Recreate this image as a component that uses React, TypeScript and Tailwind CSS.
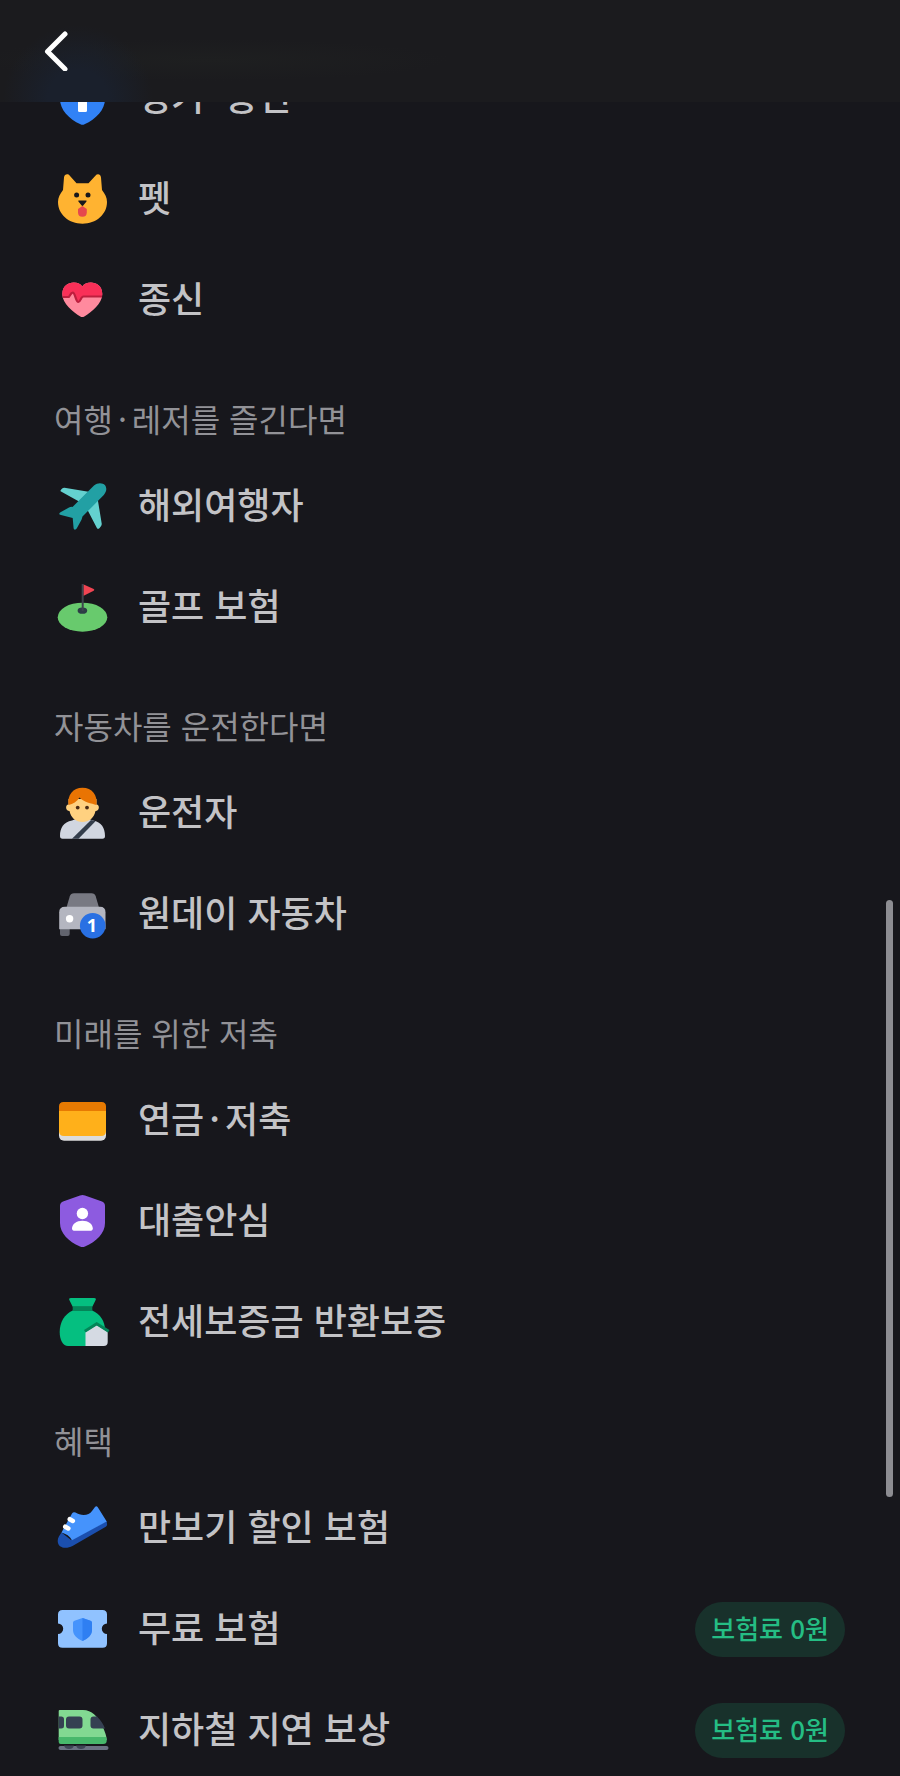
import { Fragment, type ReactNode } from 'react';

type Item = {
  label: string;
  icon: ReactNode;
  badge?: string;
};

type Section = {
  title?: string;
  items: Item[];
};

const sections: Section[] = [
  {
    items: [
      {
        label: '정기·종신',
        icon: (
          <>
            <path d="M26 3.2q2.5-1.400 5 0L47.500 9q3.500 1.200 3.500 4.500V29c0 11-9 20-20.500 25.300q-2 1-4 0C15 49 6 40 6 29V13.500Q6 10.200 9.500 9z" fill="#3182f6" />
            <rect x="24" y="14" width="9" height="28" rx="1.500" fill="#fff" />
            <rect x="15" y="21" width="27" height="9" rx="1.500" fill="#fff" />
          </>
        ),
      },
      {
        label: '펫',
        icon: (
          <>
            <path d="M10 6.500c.4-3.300 3.800-4.200 5.800-1.800L22.500 12.300h12l6.900-7.600c2-2.400 5.200-1.500 5.600 1.800L48 19c3 4 5 7.500 5 12 0 12.500-11 21.700-24.500 21.700S4 43.500 4 31c0-4.500 2-8 5-12z" fill="#ffb331" />
            <circle cx="22.600" cy="24" r="2.500" fill="#17171c" />
            <circle cx="34" cy="24" r="2.500" fill="#17171c" />
            <path d="M25 29.500h6.800c.8 0 1 .6.500 1.200l-3.100 3.800c-.5.500-1 .5-1.500 0l-3.100-3.800c-.5-.6-.4-1.200.4-1.200z" fill="#17171c" />
            <path d="M24 38l4.400-3 4.400 3v3.500q0 4.200-4.400 4.200T24 41.500z" fill="#e5484d" />
          </>
        ),
      },
      {
        label: '종신',
        icon: (
          <>
            <path d="M28.300 14.500C32 8 48.300 8.500 48.300 22c0 10-11 18-18 22.500q-2 1.200-4 0C19.300 40 8.300 32 8.300 22c0-13.500 16.300-14 20-7.500z" fill="#ff8a9e" />
            <path d="M28.300 14.500C32 8 48.300 8.500 48.300 22l-.3 2.500H29.500l-4.800 6-5.500-9-4 3H8.600L8.300 22c0-13.500 16.300-14 20-7.500z" fill="#f93058" />
            <path d="M8.800 25h5.400c2 0 2-4.500 4.500-4.500s3 9.500 5.600 9.500 2.200-5.500 5.200-5.500h18.600" fill="none" stroke="#bd1f3e" strokeWidth="2.200" />
          </>
        ),
      },
    ],
  },
  {
    title: '여행·레저를 즐긴다면',
    items: [
      {
        label: '해외여행자',
        icon: (
          <>
            <path d="M7 13.500c-.8-.5-.6-1.200.2-2l1-1q.8-.8 2.300-.7l24 4L25 23.500zM43.500 20l4.200 25.500q.2 1.500-.6 2.500l-1.500 2c-.9 1-2 1.200-2.600.2L33 31z" fill="#64d1cf" />
            <path d="M40 7.500c4-3.500 9-2.500 10.800-.5s2.500 6-1 10L28.500 38.500l-1 3.200-4.800 8.800c-1 1.600-2.800 1.500-3.100-.2l-.9-10.300L7 37c-2.200-.5-2.200-1.700-.5-2.700l8.500-4.800q1.500-.8 3.500-.6z" fill="#22a0a4" />
          </>
        ),
      },
      {
        label: '골프 보험',
        icon: (
          <>
            <ellipse cx="28.500" cy="38.200" rx="24.800" ry="14.500" fill="#68ca6d" />
            <ellipse cx="28.400" cy="31.700" rx="4.800" ry="3.100" fill="#2d3d46" />
            <path d="M28.700 5v27" stroke="#3d444d" strokeWidth="2" />
            <path d="M29.700 5.500l10 4.500q1.300.8 0 1.700l-10 5z" fill="#f04452" />
          </>
        ),
      },
    ],
  },
  {
    title: '자동차를 운전한다면',
    items: [
      {
        label: '운전자',
        icon: (
          <>
            <path d="M6 51c0-8 3.500-14 12-15.500L22 34h13l4 1.500C47.500 37 51 43 51 51q0 2.800-2.500 2.800h-40Q6 53.800 6 51z" fill="#d1d6e0" />
            <path d="M37 35l4.500 1.200L24.500 53.800h-6.500z" fill="#333d4b" />
            <path d="M14.500 14h28v5.500c3.300 0 3.300 6.500-1 6.500C40 33 35 37 28.500 37S17 33 15.500 26c-4.300 0-4.300-6.500-1-6.500z" fill="#ffd180" />
            <path d="M14.600 20C13 10 19 2.700 28.500 2.700S44 10 42.400 20C38 18.500 29 17 25.500 12.500 23 16.500 19 19 14.600 20z" fill="#e97403" />
            <circle cx="23.700" cy="22.600" r="1.900" fill="#4a2b16" />
            <circle cx="33" cy="22.600" r="1.900" fill="#4a2b16" />
          </>
        ),
      },
      {
        label: '원데이 자동차',
        icon: (
          <>
            <path d="M6 40h9.700v8q0 2-2 2H8q-2 0-2-2z" fill="#62646e" />
            <path d="M20 7.300h17.500q3.300 0 4.200 3l3.300 11.200H12.500l3.300-11.200q.9-3 4.200-3z" fill="#787982" />
            <path d="M11 20.800h35q5.500 0 5.500 5.500v17H5.200v-17q0-5.500 5.800-5.500z" fill="#b4b6c0" />
            <circle cx="15.600" cy="32.700" r="3.700" fill="#fff" />
            <circle cx="38.700" cy="39.700" r="12.800" fill="#2970e3" />
            <text
              x="38"
              y="46"
              textAnchor="middle"
              fontSize="18"
              fontWeight="700"
              fill="#fff"
              className="font-['Open_Sans',sans-serif]"
            >
              1
            </text>
          </>
        ),
      },
    ],
  },
  {
    title: '미래를 위한 저축',
    items: [
      {
        label: '연금·저축',
        icon: (
          <>
            <rect x="5" y="26" width="47" height="22.700" rx="5" fill="#dcdcdc" />
            <path d="M5 18h47v21q0 5-5 5H10q-5 0-5-5z" fill="#ffb01a" />
            <path d="M9.500 10h38q4.500 0 4.500 4.500V19H5v-4.500Q5 10 9.500 10z" fill="#e77a02" />
          </>
        ),
      },
      {
        label: '대출안심',
        icon: (
          <>
            <path d="M26 2.600q2.500-1.100 5 0L48 8.600q3 1.100 3 4.400v17c0 10-8.500 18.500-20 23.500q-2.500 1.100-5 0C14.500 48.500 6 40 6 30V13q0-3.300 3-4.400z" fill="#8d5be0" />
            <circle cx="28.400" cy="20.500" r="5.700" fill="#fff" />
            <path d="M18 35.500c0-4.500 4.500-7.800 10.400-7.800s10.400 3.300 10.400 7.800q0 2.300-3 2.300H21q-3 0-3-2.300z" fill="#fff" />
          </>
        ),
      },
      {
        label: '전세보증금 반환보증',
        icon: (
          <>
            <path d="M18.700 16.500h19.500C46 20 51 27 51 36v11q0 5-5 5H14C9 52 5.700 46 5.700 38c0-10 5-18 13-21.500z" fill="#05bf80" />
            <path d="M17 4h23q3 0 1.300 2.800L38.300 12.700H18.700l-3-5.900Q14 4 17 4z" fill="#05bf80" />
            <path d="M18.700 12.500h19.600V17H18.700z" fill="#048558" />
            <path d="M42.700 31l11 7v10q0 4-4 4H31.500V38z" fill="#d5dae3" />
            <path d="M30.800 37.300L42.700 29.800l12 7.500" fill="none" stroke="#048558" strokeWidth="3" />
          </>
        ),
      },
    ],
  },
  {
    title: '혜택',
    items: [
      {
        label: '만보기 할인 보험',
        icon: (
          <>
            <path d="M7.500 32.500L17 40l35.700-19 .4 3.500q0 1.500-1.300 2.300L18.500 46C12 49.500 3.700 48 3.700 41c0-3.500 2-6 3.800-8.500z" fill="#1b4fae" />
            <path d="M18 13.500q1.300-2 3.500-1c5 3.500 13.500 3.500 16.500-1.500l3-4q1.500-1.500 2.800.3L52.700 21.500 18 40.200c-2-4-6-6.500-10.500-7.700z" fill="#4593fc" />
            <path d="M15.800 19.200l3 1.700M11.300 26.700l3 1.700" stroke="#fff" strokeWidth="4.600" strokeLinecap="round" />
          </>
        ),
      },
      {
        label: '무료 보험',
        badge: '보험료 0원',
        icon: (
          <>
            <path d="M8.500 9h40q4.500 0 4.500 4.500v9a5.200 5.200 0 0 0 0 10.400v9.300q0 4.500-4.500 4.500h-40Q4 46.700 4 42.200v-9.300a5.200 5.200 0 0 0 0-10.400v-9Q4 9 8.500 9z" fill="#90c2ff" />
            <path d="M28.500 17l8 2.800q1.500.5 1.500 2V29c0 5-4 8.500-9.500 11-5.500-2.500-9.500-6-9.500-11v-7.200q0-1.500 1.500-2z" fill="#4593fc" />
            <path d="M28.500 17l8 2.800q1.500.5 1.500 2V29c0 5-4 8.500-9.500 11z" fill="#2f7ff2" />
          </>
        ),
      },
      {
        label: '지하철 지연 보상',
        badge: '보험료 0원',
        icon: (
          <>
            <path d="M4.700 9q0-1 1-1H29c9 0 14.500 7 18 13.500 3 5.500 5.700 12 5.700 16.500H4.700z" fill="#82d992" />
            <path d="M4.700 35h47.500l.5 3.500q0 3.500-3.500 3.500H6.700q-2 0-2-2z" fill="#48b86c" />
            <path d="M4.700 14.500h2.500Q10 14.500 10 17v7q0 2.500-2.800 2.500H4.700zM15 14.500h10.500q3 0 3 3v6q0 3-3 3H15q-3 0-3-3v-6q0-3 3-3zM39.500 14.500h3.500c4 4 6.500 8 8 12H39.500q-3 0-3-3v-6q0-3 3-3z" fill="#354052" />
            <path d="M6.500 46h46" stroke="#6b7283" strokeWidth="4" strokeLinecap="round" />
            <path d="M10 43.500h10q-1 3.500-5 3.500t-5-3.500zM22 43.500h10q-1 3.500-5 3.500t-5-3.500z" fill="#3f4656" />
          </>
        ),
      },
    ],
  },
];

// the font's middle dot is narrow, give it some air on both sides
function Label({ text }: { text: string }) {
  return text.split('·').map((part, index) => (
    <Fragment key={index}>
      {index > 0 && <span className="mx-[5px]">·</span>}
      {part}
    </Fragment>
  ));
}

function Row({ item }: { item: Item }) {
  return (
    <li>
      <a href="#" className="flex min-h-14 items-center gap-7">
        <svg viewBox="0 0 56 56" className="size-14 shrink-0" aria-hidden="true">
          {item.icon}
        </svg>
        <span className="flex-1 pb-1.5 text-[36px] leading-[48px] font-medium text-[#c3c3c6]">
          <Label text={item.label} />
        </span>
        {item.badge && (
          <span className="rounded-full bg-[#18312b] px-4 pt-[7px] pb-[10px] text-[26px] leading-[38px] font-medium text-[#25bd84]">
            {item.badge}
          </span>
        )}
      </a>
    </li>
  );
}

export default function App() {
  return (
    <div
      lang="ko"
      className="relative min-h-screen overflow-hidden bg-[#17171c] font-['Noto_Sans_CJK_KR',sans-serif]"
    >
      <header className="absolute inset-x-0 top-0 z-10 flex h-[102px] items-center bg-[#1b1b1e] bg-[radial-gradient(circle_at_78px_100px,#1a202c_0,#1a202c_30px,transparent_75px),radial-gradient(ellipse_at_210px_60px,#1e1f20_0,transparent_240px)] px-9">
        <button type="button" aria-label="뒤로" className="text-white">
          <svg viewBox="0 0 40 40" className="size-10" fill="none" aria-hidden="true">
            <path
              d="M29 3L11.500 20.500 29 38"
              stroke="currentColor"
              strokeWidth="5"
              strokeLinecap="round"
              strokeLinejoin="round"
            />
          </svg>
        </button>
      </header>

      <main className="flex flex-col gap-[66px] pt-[70px] pr-[55px] pb-4 pl-[54px]">
        {sections.map((section, index) => (
          <section key={index}>
            {section.title && (
              <h2 className="mb-9 text-[32px] leading-[48px] text-[#929297]">
                <Label text={section.title} />
              </h2>
            )}
            <ul className="flex flex-col gap-[45px]">
              {section.items.map((item) => (
                <Row key={item.label} item={item} />
              ))}
            </ul>
          </section>
        ))}
      </main>

      {/* scroll indicator */}
      <div className="absolute top-[900px] right-[7px] h-[597px] w-[7px] rounded-full bg-[#8d8d92]" />
    </div>
  );
}
